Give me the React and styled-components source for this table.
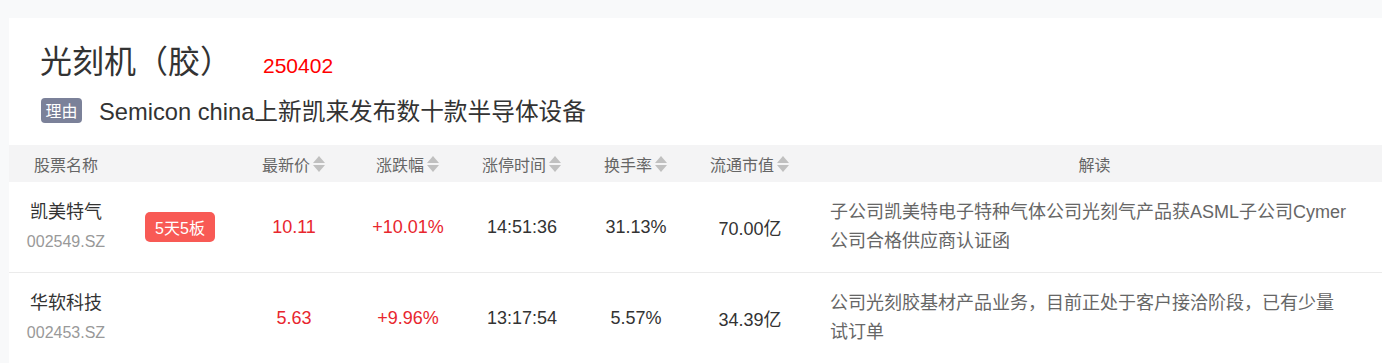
import React from "react";
import styled, { createGlobalStyle } from "styled-components";

const columns = [
  { key: "name", label: "股票名称" },
  { key: "tag", label: "" },
  { key: "price", label: "最新价", sort: true },
  { key: "change", label: "涨跌幅", sort: true },
  { key: "time", label: "涨停时间", sort: true },
  { key: "turnover", label: "换手率", sort: true },
  { key: "cap", label: "流通市值", sort: true },
  { key: "desc", label: "解读" },
];

const stocks = [
  {
    name: "凯美特气",
    code: "002549.SZ",
    tag: "5天5板",
    price: "10.11",
    change: "+10.01%",
    time: "14:51:36",
    turnover: "31.13%",
    cap: "70.00亿",
    desc: "子公司凯美特电子特种气体公司光刻气产品获ASML子公司Cymer公司合格供应商认证函",
  },
  {
    name: "华软科技",
    code: "002453.SZ",
    price: "5.63",
    change: "+9.96%",
    time: "13:17:54",
    turnover: "5.57%",
    cap: "34.39亿",
    desc: "公司光刻胶基材产品业务，目前正处于客户接洽阶段，已有少量试订单",
  },
];

const SortIcon = () => (
  <SortSvg width="14" height="18" viewBox="0 0 14 18">
    <path d="M7 1 L13 8 L1 8 Z" fill="#c0c0c0" />
    <path d="M1 10 L13 10 L7 17 Z" fill="#c0c0c0" />
  </SortSvg>
);

const App = () => {
  return (
    <>
      <GlobalStyle />
      <Card>
        <TitleRow>
          <Title>光刻机（胶）</Title>
          <Code>250402</Code>
        </TitleRow>
        <ReasonRow>
          <ReasonTag>理由</ReasonTag>
          <ReasonText>Semicon china上新凯来发布数十款半导体设备</ReasonText>
        </ReasonRow>
        <Table>
          <HeadRow>
            {columns.map((c) => (
              <HeadCell key={c.key}>
                {c.label}
                {c.sort && <SortIcon />}
              </HeadCell>
            ))}
          </HeadRow>
          {stocks.map((s) => (
            <Row key={s.code}>
              <Cell>
                <NameBlock>
                  <StockName>{s.name}</StockName>
                  <StockCode>{s.code}</StockCode>
                </NameBlock>
              </Cell>
              <Cell>{s.tag && <Badge>{s.tag}</Badge>}</Cell>
              <Cell $up>{s.price}</Cell>
              <Cell $up>{s.change}</Cell>
              <Cell>{s.time}</Cell>
              <Cell>{s.turnover}</Cell>
              <Cell>{s.cap}</Cell>
              <DescCell>
                <DescText>{s.desc}</DescText>
              </DescCell>
            </Row>
          ))}
        </Table>
      </Card>
    </>
  );
};

export default App;

const GlobalStyle = createGlobalStyle`
  body {
    margin: 0;
    background: #f8f9fa;
    font-family: "Liberation Sans", "Noto Sans CJK SC", sans-serif;
    color: #333;
  }
`;

const Card = styled.div`
  box-sizing: border-box;
  margin: 18px 0 0 9px;
  background: #fff;
  padding-top: 22px;
  height: 345px;
  overflow: hidden;
`;

const TitleRow = styled.div`
  display: flex;
  align-items: baseline;
  padding-left: 31px;
  height: 44px;
`;

const Title = styled.h1`
  margin: 0;
  font-size: 32px;
  line-height: 44px;
  font-weight: normal;
  color: #333;
`;

const Code = styled.span`
  margin-left: 31px;
  font-size: 21px;
  color: #f00;
`;

const ReasonRow = styled.div`
  display: flex;
  align-items: center;
  padding-left: 32px;
  margin-top: 11px;
  height: 30px;
`;

const ReasonTag = styled.span`
  display: inline-flex;
  align-items: center;
  justify-content: center;
  width: 41px;
  height: 25px;
  border-radius: 4px;
  background: #7b8199;
  color: #fff;
  font-size: 16px;
`;

const ReasonText = styled.span`
  margin-left: 17px;
  font-size: 23.7px;
  color: #333;
`;

const Table = styled.div`
  margin-top: 20px;
`;

const grid = `
  display: grid;
  grid-template-columns: repeat(7, 114px) 1fr;
`;

const HeadRow = styled.div`
  ${grid}
  height: 37px;
  background: #f4f4f5;
`;

const HeadCell = styled.div`
  display: flex;
  align-items: center;
  justify-content: center;
  font-size: 16px;
  color: #666;
`;

const SortSvg = styled.svg`
  margin-left: 2px;
`;

const Row = styled.div`
  ${grid}
  height: 90px;
  border-bottom: 1px solid #ebebeb;
`;

const Cell = styled.div`
  display: flex;
  align-items: center;
  justify-content: center;
  font-size: 18px;
  color: ${(p) => (p.$up ? "#e8262e" : "#333")};
`;

const NameBlock = styled.div`
  display: flex;
  flex-direction: column;
  align-items: center;
`;

const StockName = styled.div`
  font-size: 18px;
  line-height: 30px;
  color: #333;
`;

const StockCode = styled.div`
  font-size: 16px;
  line-height: 30px;
  color: #999;
`;

const Badge = styled.span`
  display: inline-flex;
  align-items: center;
  justify-content: center;
  width: 70px;
  height: 30px;
  border-radius: 5px;
  background: #f85a55;
  color: #fff;
  font-size: 16px;
`;

const DescCell = styled.div`
  display: flex;
  align-items: center;
  padding-left: 23px;
`;

const DescText = styled.div`
  width: 519px;
  font-size: 18px;
  line-height: 29px;
  color: #666;
`;
